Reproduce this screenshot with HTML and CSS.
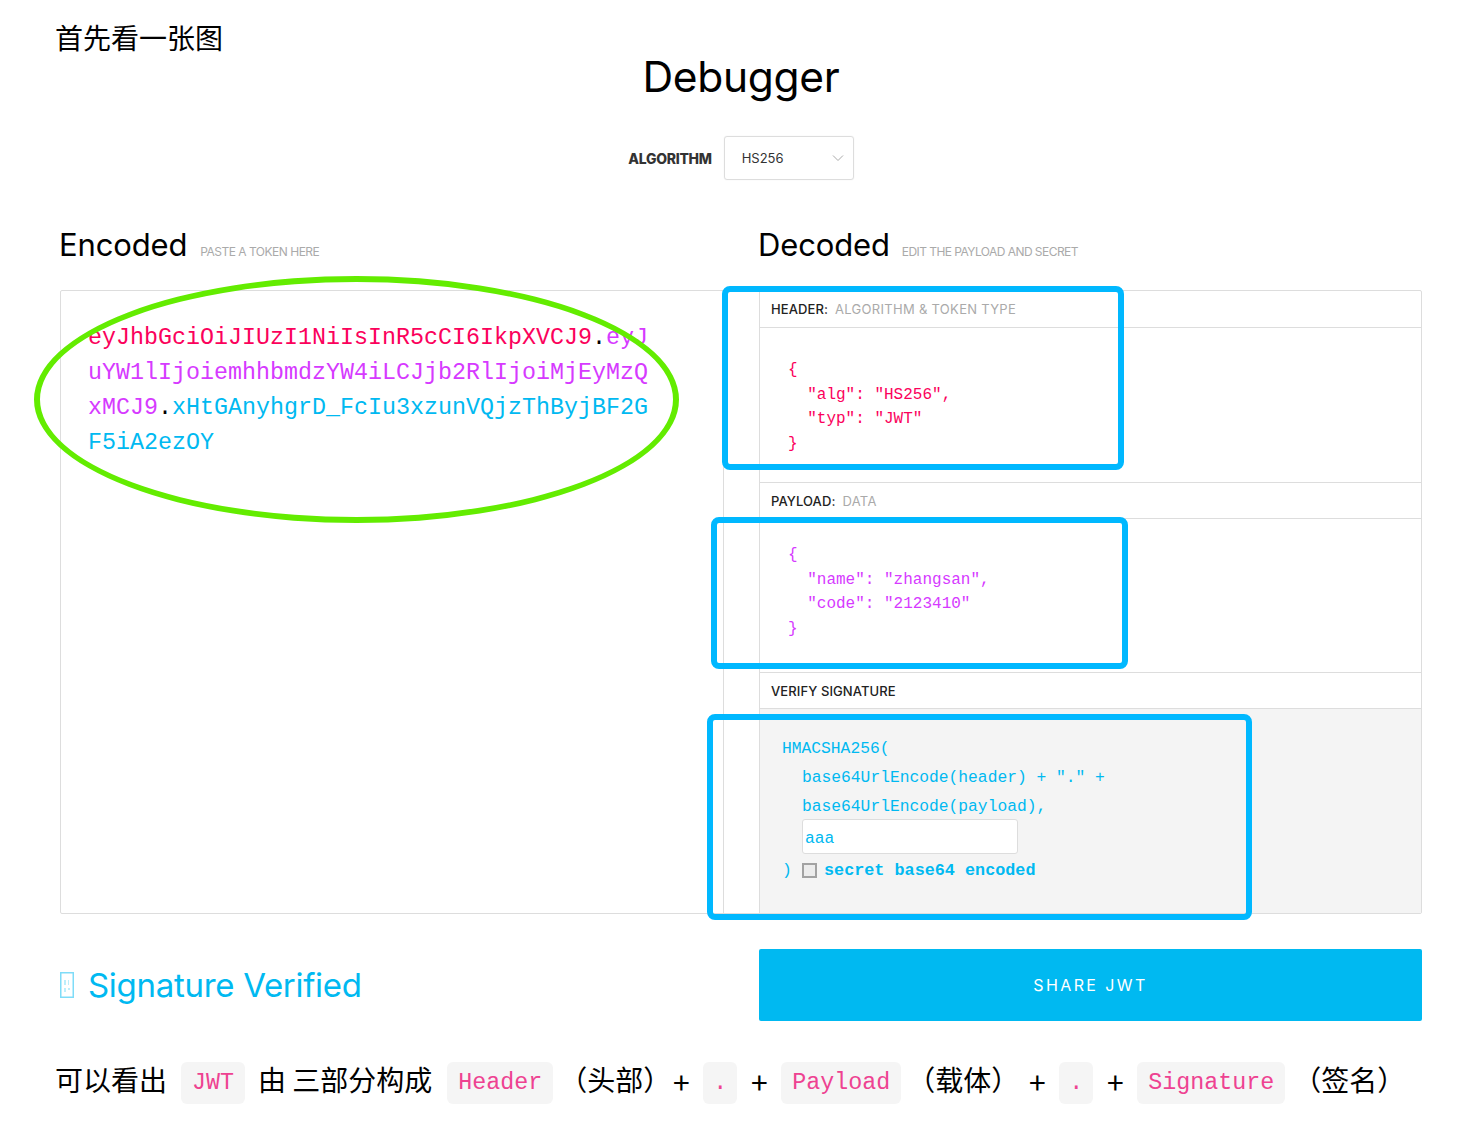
FILE: index.html
```html
<!DOCTYPE html>
<html lang="zh">
<head>
<meta charset="utf-8">
<title>JWT Debugger</title>
<link rel="stylesheet" href="styles.css">
</head>
<body>
<div class="page">
  <p class="intro">首先看一张图</p>
  <section class="debugger">
    <h1 class="title">Debugger</h1>
    <div class="algo">
      <span class="algo-label">ALGORITHM</span>
      <div class="select">
        <span>HS256</span>
        <svg class="chevron" width="12" height="8" viewBox="0 0 12 8"><path d="M1 1.5l5 5 5-5" fill="none" stroke="#aaa" stroke-width="1"/></svg>
      </div>
    </div>
    <div class="heads">
      <div class="head"><h2>Encoded</h2><small>PASTE A TOKEN HERE</small></div>
      <div class="head head-r"><h2>Decoded</h2><small>EDIT THE PAYLOAD AND SECRET</small></div>
    </div>
    <div class="panel">
      <div class="encoded">
        <div class="token"><span class="red">eyJhbGciOiJIUzI1NiIsInR5cCI6IkpXVCJ9</span><span class="dot">.</span><span class="purple">eyJuYW1lIjoiemhhbmdzYW4iLCJjb2RlIjoiMjEyMzQxMCJ9</span><span class="dot">.</span><span class="cyan">xHtGAnyhgrD_FcIu3xzunVQjzThByjBF2GF5iA2ezOY</span></div>
      </div>
      <div class="decoded">
        <div class="bar">HEADER:<span>ALGORITHM &amp; TOKEN TYPE</span></div>
        <pre class="json red body-header">{
  "alg": "HS256",
  "typ": "JWT"
}</pre>
        <div class="bar bar-t">PAYLOAD:<span>DATA</span></div>
        <pre class="json purple body-payload">{
  "name": "zhangsan",
  "code": "2123410"
}</pre>
        <div class="bar bar-t">VERIFY SIGNATURE</div>
        <div class="verify">
          <div class="v-line">HMACSHA256(</div>
          <div class="v-line v-in">base64UrlEncode(header) + "." +</div>
          <div class="v-line v-in">base64UrlEncode(payload),</div>
          <div class="secret">aaa</div>
          <div class="v-end"><span class="paren">)</span><span class="check"></span><b>secret base64 encoded</b></div>
        </div>
      </div>
    </div>
    <div class="foot">
      <div class="verified">
        <svg class="tofu" width="14" height="26" viewBox="0 0 14 26">
          <rect x="0.75" y="0.75" width="12.5" height="24.5" fill="none" stroke="#7fdcf8" stroke-width="1.5"/>
          <path d="M4 8h2v5H4zM8 8h1v5H8zM4 16h2v4H4zM8 16h2v2H8v2" fill="#bdeefb"/>
        </svg>
        <span>Signature Verified</span>
      </div>
      <div class="share">SHARE JWT</div>
    </div>
  </section>
  <p class="summary">
    <span class="t">可以看出</span><code>JWT</code><span class="t t2">由 三部分构成</span><code>Header</code><span class="t p1">（头部）</span><span class="plus">+</span><code class="dotchip">.</code><span class="plus">+</span><code>Payload</code><span class="t p2">（载体）</span><span class="plus">+</span><code class="dotchip">.</code><span class="plus">+</span><code>Signature</code><span class="t p3">（签名）</span>
  </p>
  <div class="mark ellipse"></div>
  <div class="mark box-a"></div>
  <div class="mark box-b"></div>
  <div class="mark box-c"></div>
</div>
</body>
</html>
```
FILE: styles.css
```css
* { box-sizing: border-box; }
html, body { margin: 0; padding: 0; background: #fff; }
body { font-family: "Inter", "Noto Sans CJK SC", sans-serif; color: #000; }
.page { position: relative; width: 1474px; height: 1124px; overflow: hidden; padding-top: 18px; }
.intro { margin: 0 0 0 55px; font: 28px/38px "Noto Sans CJK SC", sans-serif; height: 38px; }
.debugger { margin: 0 52px 0 60px; }
.title { margin: -4px 0 0; text-align: center; font-size: 42.5px; line-height: 50px; font-weight: 400; letter-spacing: -0.3px; }
.algo { display: flex; justify-content: center; align-items: center; gap: 12px; margin-top: 34px; height: 44px; }
.algo-label { font-size: 14px; font-weight: 800; color: #333; letter-spacing: -0.3px; }
.select { width: 130px; height: 44px; border: 1px solid #ddd; border-radius: 3px; display: flex; align-items: center; justify-content: space-between; padding: 0 9px 0 17px; font-size: 13px; color: #333; box-shadow: 0 0 1px #ddd; }
.heads { display: grid; grid-template-columns: 699px 1fr; margin-top: 45px; height: 40px; }
.head { display: flex; align-items: baseline; gap: 13px; margin-left: -1px; }
.head-r { gap: 12px; }
.head h2 { margin: 0; font-size: 31px; line-height: 40px; font-weight: 400; letter-spacing: -0.15px; }
.head small { font-size: 12px; color: #aaa; letter-spacing: -0.5px; }
.head-r small { letter-spacing: -0.55px; }
.panel { display: grid; grid-template-columns: 663px 1fr; height: 624px; margin-top: 25px; border: 1px solid #ddd; border-radius: 2px; }
.encoded { border-right: 1px solid #ddd; padding: 30px 0 0 27px; }
.token { width: 563px; font: 23.33px/35px "Liberation Mono", monospace; word-break: break-all; }
.red { color: #fb015b; }
.purple { color: #d63aff; }
.cyan { color: #00b9f1; }
.dot { color: #000; }
.decoded { margin-left: 35px; border-left: 1px solid #ddd; display: flex; flex-direction: column; }
.bar { height: 37px; flex: none; border-bottom: 1px solid #ddd; padding-left: 11px; display: flex; align-items: center; font-size: 13px; font-weight: 500; color: #222; letter-spacing: 0.1px; }
.bar-t { border-top: 1px solid #ddd; }
.bar span { margin-left: 7px; color: #aaa; font-weight: 400; letter-spacing: 0.3px; }
.json { margin: 0; font: 16px/24.5px "Liberation Mono", monospace; padding-left: 28px; }
.body-header { height: 154px; padding-top: 30px; }
.body-payload { height: 153px; padding-top: 24px; }
.verify { flex: 1; background: #f4f4f4; padding: 25px 0 0 22px; font: 16.3px/29px "Liberation Mono", monospace; color: #00b9f1; }
.v-in { padding-left: 20px; }
.secret { width: 216px; height: 35px; margin: -2px 0 0 20px; background: #fff; border: 1px solid #ddd; border-radius: 3px; padding-left: 2px; line-height: 37px; }
.v-end { display: flex; align-items: center; height: 30px; margin-top: 1px; }
.paren { width: 20px; }
.check { width: 15px; height: 15px; border: 2px solid #a2a2a2; background: #ececec; margin-right: 7px; }
.v-end b { font-size: 16.8px; }
.foot { display: grid; grid-template-columns: 699px 1fr; margin-top: 35px; height: 72px; }
.verified { display: flex; align-items: center; gap: 14px; font-size: 33px; color: #00b9f1; letter-spacing: -0.3px; }
.share { background: #00b9f1; color: #fff; border-radius: 2px; display: flex; align-items: center; justify-content: center; font-size: 16px; font-weight: 400; letter-spacing: 2.4px; }
.summary { margin: 41px 0 0 55px; display: flex; align-items: center; height: 42px; font-family: "Noto Sans CJK SC", sans-serif; font-size: 28px; white-space: nowrap; }
.summary code { flex: none; height: 42px; margin: 0 14px; padding: 0 11px; background: #f5f5f5; border-radius: 6px; color: #ee4291; font: 23.33px/42px "Liberation Mono", monospace; }
.summary .dotchip { padding: 0 10px; }
.t { margin-bottom: 8px; }
.t2 { margin-left: -1px; margin-right: 1px; }
.p1 { margin-left: -8px; margin-right: 2px; }
.p2 { margin-left: -8px; margin-right: 10px; }
.p3 { margin-left: -6px; }
.plus { width: 16px; display: flex; justify-content: center; font-size: 30px; margin-bottom: 4px; }
.mark { position: absolute; pointer-events: none; }
.ellipse { left: 34px; top: 276px; width: 645px; height: 247px; border: 6px solid #63ec00; border-radius: 50%; }
.box-a, .box-b, .box-c { border: 6px solid #00b8ff; border-radius: 8px; }
.box-a { left: 722px; top: 286px; width: 402px; height: 184px; }
.box-b { left: 711px; top: 517px; width: 417px; height: 152px; }
.box-c { left: 707px; top: 714px; width: 545px; height: 206px; }
```
